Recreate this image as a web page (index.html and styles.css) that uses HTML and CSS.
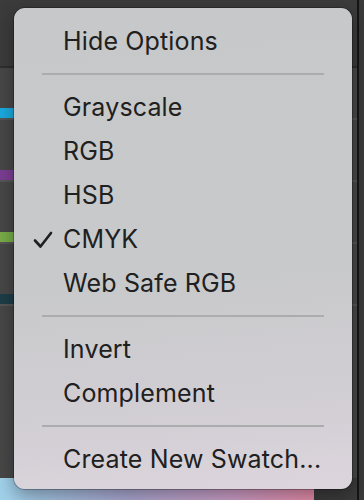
FILE: index.html
```html
<!DOCTYPE html>
<html lang="en">
<head>
    <meta charset="UTF-8">
    <meta name="viewport" content="width=device-width, initial-scale=1.0">
    <title>Swatch Options</title>
    <link rel="stylesheet" href="styles.css">
</head>
<body>
    <div class="app">
        <div class="panel">
            <div class="toolbar"></div>
            <div class="swatches">
                <div class="swatch-row"><span class="chip cyan"></span></div>
                <div class="swatch-row"><span class="chip purple"></span></div>
                <div class="swatch-row"><span class="chip green"></span></div>
                <div class="swatch-row"><span class="chip teal"></span></div>
            </div>
            <div class="preview"></div>
        </div>
        <div class="side"></div>

        <ul class="menu">
            <li class="menu-item">Hide Options</li>
            <li class="menu-sep"></li>
            <li class="menu-item">Grayscale</li>
            <li class="menu-item">RGB</li>
            <li class="menu-item">HSB</li>
            <li class="menu-item checked">
                <svg class="check" viewBox="0 0 20 18" width="20" height="18">
                    <path d="M2 9.5 L7.5 15.5 L18 2" fill="none" stroke="#1f1f1f" stroke-width="2.6" stroke-linecap="round" stroke-linejoin="round"/>
                </svg>
                CMYK
            </li>
            <li class="menu-item">Web Safe RGB</li>
            <li class="menu-sep"></li>
            <li class="menu-item">Invert</li>
            <li class="menu-item">Complement</li>
            <li class="menu-sep"></li>
            <li class="menu-item">Create New Swatch...</li>
        </ul>
    </div>
</body>
</html>
```

FILE: styles.css
```css
* {
    margin: 0;
    padding: 0;
    box-sizing: border-box;
}
body {
    width: 364px;
    height: 500px;
    overflow: hidden;
    background-color: #3a3a3a;
    font-family: 'Inter', 'Liberation Sans', sans-serif;
}
.app {
    position: relative;
    display: flex;
    width: 364px;
    height: 500px;
}
.panel {
    width: 357px;
    display: flex;
    flex-direction: column;
}
.toolbar {
    height: 68px;
    background-color: #3b3b3b;
    border-bottom: 2px solid #2e2e2e;
}
.swatches {
    height: 410px;
    background-color: #474747;
    display: flex;
    flex-direction: column;
    padding-top: 40px;
}
.swatch-row {
    height: 62px;
}
.swatch-row:last-child {
    flex: 1;
}
.chip {
    display: block;
    height: 12px;
    border-bottom: 2px solid #555555;
    background: linear-gradient(90deg, var(--chip) 14px, #474747 14px);
}
.chip.cyan { --chip: #1aa9dd; }
.chip.purple { --chip: #7a3d92; }
.chip.green { --chip: #76ac47; }
.chip.teal { --chip: #1d3d48; }
.preview {
    flex: 1;
    background: linear-gradient(90deg, #9fd2ea 0%, #a8a6cf 35%, #c99bc4 65%, #e28aa6 88%, #3a3a3a 88%);
}
.side {
    width: 7px;
    background-color: #3a3a3a;
    border-left: 2px solid #151515;
}

.menu {
    position: absolute;
    left: 14px;
    top: 8px;
    width: 338px;
    height: 481px;
    list-style: none;
    padding: 11px 0 8px;
    border-radius: 11px;
    background: linear-gradient(175deg, #c6c8ca 0%, #c8c9cb 55%, #d3cfd5 85%, #ddd5dd 100%);
    box-shadow: 0 0 0 1px rgba(0,0,0,0.25), 0 6px 18px rgba(0,0,0,0.35);
}
.menu-item {
    position: relative;
    height: 44px;
    line-height: 44px;
    padding-left: 49px;
    font-size: 25px;
    letter-spacing: 0.15px;
    color: #202020;
}
.menu-sep {
    height: 22px;
    display: flex;
    align-items: center;
    padding: 0 28px;
}
.menu-sep::before {
    content: '';
    flex: 1;
    height: 2px;
    background-color: #aaacae;
}
.check {
    position: absolute;
    left: 19px;
    top: 14px;
}
```
